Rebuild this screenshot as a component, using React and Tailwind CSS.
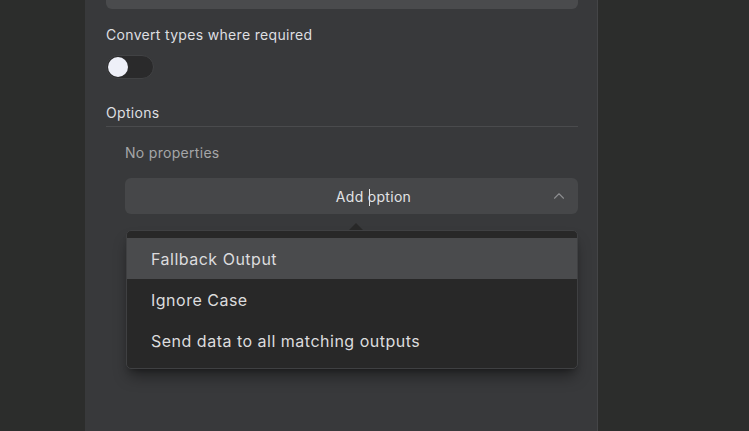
import React from 'react';
import { ChevronUp } from 'lucide-react';

const options = ['Fallback Output', 'Ignore Case', 'Send data to all matching outputs'];

export default function App() {
  return (
    <div
      className="h-[431px] w-[749px] overflow-hidden bg-[#2c2d2c] flex"
      style={{ fontFamily: 'Inter, "Noto Sans", sans-serif' }}
    >
      <div className="w-[85px] shrink-0" />

      {/* Settings panel */}
      <div className="w-[513px] shrink-0 bg-[#38393b] border-r border-[#444547] pl-[21px] pr-[19px] flex flex-col">
        <div className="-mt-[27px] h-[36px] rounded-md bg-[#4a4b4d]" />

        <div className="mt-[16px] text-[14px] leading-[20px] tracking-[0.32px] text-[#dedfe1]">
          Convert types where required
        </div>
        <div className="mt-[10px] w-[48px] h-[24px] rounded-full bg-[#2a2a2b] border border-[#414244] flex items-center pl-[1px]">
          <div className="w-[20px] h-[20px] rounded-full bg-[#eef0f8]" />
        </div>

        <div className="mt-[24px] text-[14px] leading-[20px] tracking-[0.32px] text-[#dedfe1] pb-[3px] border-b border-[#4a4b4d]">
          Options
        </div>

        <div className="pl-[19px] flex flex-col">
          <div className="mt-[16px] text-[14px] leading-[20px] tracking-[0.3px] text-[#a5a6a8]">No properties</div>

          <div className="relative mt-[15px]">
            <div className="h-[36px] rounded-md bg-[#464749] flex items-center justify-center pl-[44px] relative">
              <span className="text-[14px] tracking-[0.3px] text-[#e2e3e5]">
                Add <span className="relative">o<span className="absolute left-[1px] top-[1px] bottom-[-1px] w-px bg-[#e2e3e5]" /></span>ption
              </span>
              <ChevronUp size={18} strokeWidth={1.5} className="absolute right-[10px] text-[#8c8d8f]" />
            </div>

            {/* Dropdown menu */}
            <div className="relative mt-[16px] ml-px rounded-[5px] bg-[#282828] border border-[#3f4042] shadow-lg shadow-black/40 py-[7px]">
              <div className="absolute -top-[8px] left-[222px] w-0 h-0 border-l-[7px] border-r-[7px] border-b-[7px] border-l-transparent border-r-transparent border-b-[#282828]" />
              {options.map((o, i) => (
                <div
                  key={o}
                  className={
                    'h-[41px] flex items-center pl-[24px] text-[16px] tracking-[0.5px] text-[#dcdcde] ' +
                    (i === 0 ? 'bg-[#4a4b4d]' : '')
                  }
                >
                  {o}
                </div>
              ))}
            </div>
          </div>
        </div>
      </div>

      <div className="flex-1" />
    </div>
  );
}
